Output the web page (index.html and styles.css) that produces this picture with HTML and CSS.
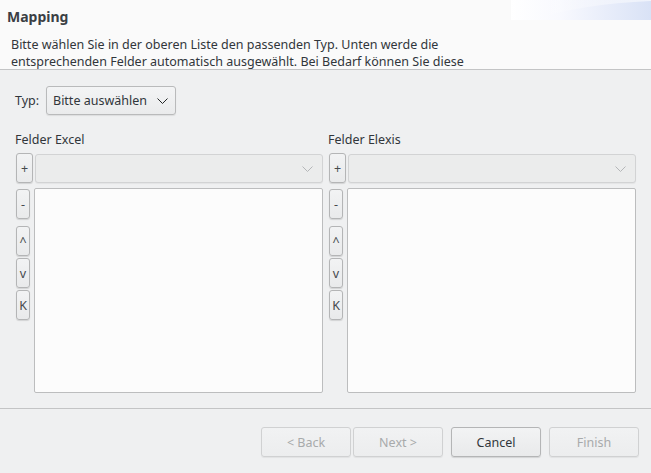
FILE: index.html
```html
<!DOCTYPE html>
<html lang="de">
<head>
<meta charset="utf-8">
<title>Mapping</title>
<link rel="stylesheet" href="styles.css">
</head>
<body>
<div class="dialog">
  <header class="header">
    <div class="header-text">
      <div class="title">Mapping</div>
      <p class="desc">Bitte wählen Sie in der oberen Liste den passenden Typ. Unten werde die<br>entsprechenden Felder automatisch ausgewählt. Bei Bedarf können Sie diese</p>
    </div>
    <svg class="banner" width="140" height="20" viewBox="0 0 140 20">
      <defs>
        <linearGradient id="bg1" x1="0" y1="0" x2="1" y2="0">
          <stop offset="0" stop-color="#ffffff"/>
          <stop offset="0.35" stop-color="#f8f9fe"/>
          <stop offset="1" stop-color="#d9e2f6"/>
        </linearGradient>
        <linearGradient id="bg2" x1="0" y1="0" x2="1" y2="0">
          <stop offset="0" stop-color="#ffffff" stop-opacity="0"/>
          <stop offset="1" stop-color="#ffffff" stop-opacity="0.6"/>
        </linearGradient>
      </defs>
      <rect width="140" height="20" fill="url(#bg1)"/>
      <path d="M20,20 Q70,4 140,1 L140,0 L20,0 Z" fill="url(#bg2)"/>
    </svg>
  </header>

  <main class="content">
    <div class="typ-row">
      <span class="typ-label">Typ:</span>
      <div class="combo typ-combo">
        <span class="combo-text">Bitte auswählen</span>
        <svg class="chev" width="11" height="6" viewBox="0 0 11 6"><path d="M0.5,0.5 L5.5,5.5 L10.5,0.5" fill="none" stroke="#232627" stroke-width="1"/></svg>
      </div>
    </div>

    <div class="columns">
      <section class="col">
        <div class="col-label">Felder Excel</div>
        <div class="add-row">
          <button class="tool add">+</button>
          <div class="combo disabled">
            <svg class="chev" width="11" height="6" viewBox="0 0 11 6"><path d="M0.5,0.5 L5.5,5.5 L10.5,0.5" fill="none" stroke="#b4b6b8" stroke-width="1"/></svg>
          </div>
        </div>
        <div class="list-row">
          <div class="tools">
            <button class="tool small">-</button>
            <button class="tool small spaced">^</button>
            <button class="tool small">v</button>
            <button class="tool small">K</button>
          </div>
          <div class="list"></div>
        </div>
      </section>

      <section class="col">
        <div class="col-label">Felder Elexis</div>
        <div class="add-row">
          <button class="tool add">+</button>
          <div class="combo disabled">
            <svg class="chev" width="11" height="6" viewBox="0 0 11 6"><path d="M0.5,0.5 L5.5,5.5 L10.5,0.5" fill="none" stroke="#b4b6b8" stroke-width="1"/></svg>
          </div>
        </div>
        <div class="list-row">
          <div class="tools">
            <button class="tool small">-</button>
            <button class="tool small spaced">^</button>
            <button class="tool small">v</button>
            <button class="tool small">K</button>
          </div>
          <div class="list"></div>
        </div>
      </section>
    </div>
  </main>

  <footer class="footer">
    <button class="btn" disabled>&lt; Back</button>
    <button class="btn next" disabled>Next &gt;</button>
    <button class="btn cancel">Cancel</button>
    <button class="btn finish" disabled>Finish</button>
  </footer>
</div>
</body>
</html>
```

FILE: styles.css
```css
* { box-sizing: border-box; }

html, body {
  margin: 0;
  padding: 0;
  background: #eff0f1;
}

body {
  font-family: "Noto Sans", "Open Sans", "DejaVu Sans", sans-serif;
  font-size: 12.5px;
  color: #31363b;
}

.dialog {
  width: 651px;
  height: 473px;
  display: flex;
  flex-direction: column;
  overflow: hidden;
}

/* header */
.header {
  height: 70px;
  flex: none;
  background: #fafafa;
  border-bottom: 1px solid #c3c4c5;
  display: flex;
  justify-content: space-between;
  align-items: flex-start;
  overflow: hidden;
}

.header-text {
  padding: 8px 0 0 7px;
}

.title {
  font-weight: bold;
  font-size: 14px;
  line-height: 18px;
  color: #3a3f44;
}

.desc {
  margin: 10px 0 0 4px;
  font-size: 12.5px;
  line-height: 17px;
}

.banner {
  display: block;
  flex: none;
}

/* content */
.content {
  flex: 1;
  padding: 16px 15px 0 15px;
  border-bottom: 1px solid #c3c4c5;
}

.typ-row {
  display: flex;
  align-items: center;
  gap: 6px;
  height: 29px;
}

.typ-label {
  width: 25px;
  line-height: 17px;
}

.combo {
  display: flex;
  align-items: center;
  justify-content: space-between;
  border: 1px solid #b9babb;
  border-radius: 3px;
  background: linear-gradient(#f3f4f5, #eaebec);
  box-shadow: 0 1px 1px rgba(0,0,0,0.08);
}

.typ-combo {
  width: 130px;
  height: 29px;
  padding: 0 7px 0 6px;
}

.combo-text {
  line-height: 17px;
  white-space: nowrap;
}

.combo.disabled {
  flex: 1;
  height: 29px;
  margin-top: 1px;
  border-color: #d2d3d4;
  background: #ebecec;
  box-shadow: 0 1px 1px rgba(0,0,0,0.05);
  justify-content: flex-end;
  padding-right: 9px;
}

.chev { display: block; }

.columns {
  display: grid;
  grid-template-columns: 308px 308px;
  column-gap: 5px;
  margin-top: 16px;
}

.col-label {
  line-height: 17px;
  height: 17px;
  margin-bottom: 5px;
}

.add-row {
  display: flex;
  align-items: flex-start;
  gap: 2px;
  height: 30px;
  padding-left: 1px;
}

.tool {
  font-family: inherit;
  font-size: 12.5px;
  font-weight: normal;
  color: #45494d;
  padding: 0;
  margin: 0;
  border: 1px solid #b4b5b6;
  border-radius: 3px;
  background: linear-gradient(#f2f3f4, #e9eaeb);
  box-shadow: 0 1px 1px rgba(0,0,0,0.12);
  line-height: 17px;
}

.tool.add {
  width: 17px;
  height: 30px;
}

.list-row {
  display: flex;
  gap: 4px;
  margin-top: 5px;
  padding-left: 1px;
}

.tools {
  display: flex;
  flex-direction: column;
  gap: 2px;
  width: 14px;
  padding-top: 1px;
}

.tool.small {
  width: 14px;
  height: 30px;
}

.tool.small.spaced {
  margin-top: 5px;
}

.list {
  flex: 1;
  height: 205px;
  background: #fcfcfc;
  border: 1px solid #bcbdbe;
  border-radius: 2px;
}

/* footer */
.footer {
  flex: none;
  height: 64px;
  display: flex;
  justify-content: flex-end;
  align-items: flex-start;
  padding: 18px 12px 0 0;
}

.btn {
  font-family: inherit;
  font-size: 12.5px;
  width: 90px;
  height: 30px;
  margin: 0;
  padding: 0;
  color: #31363b;
  border: 1px solid #b4b5b6;
  border-radius: 3px;
  background: linear-gradient(#f2f3f4, #e9eaeb);
  box-shadow: 0 1px 1px rgba(0,0,0,0.12);
}

.btn:disabled {
  color: #a8aaab;
  border-color: #d0d1d2;
  background: linear-gradient(#f1f2f3, #ecedee);
  box-shadow: 0 1px 1px rgba(0,0,0,0.06);
}

.btn.next { margin-left: 2px; }
.btn.cancel { margin-left: 8px; }
.btn.finish { margin-left: 8px; }
```
